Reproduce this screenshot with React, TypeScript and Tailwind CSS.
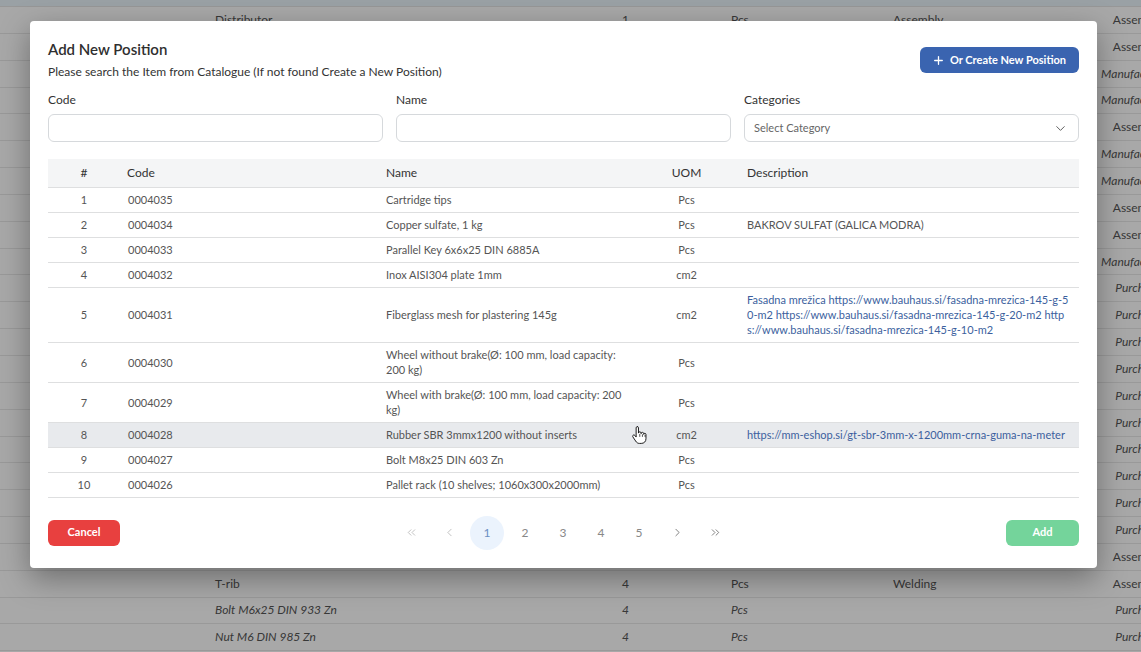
import { ChevronDown, ChevronLeft, ChevronRight, ChevronsLeft, ChevronsRight, Plus } from 'lucide-react';

type BgRow = { name?: string; qty?: string; uom?: string; op?: string; type: string; italic?: boolean };

const bgRows: BgRow[] = [
  { name: 'Distributor', qty: '1', uom: 'Pcs', op: 'Assembly', type: 'Assembly' },
  { type: 'Assembly' },
  { type: 'Manufacturing', italic: true },
  { type: 'Manufacturing', italic: true },
  { type: 'Assembly' },
  { type: 'Manufacturing', italic: true },
  { type: 'Manufacturing', italic: true },
  { type: 'Assembly' },
  { type: 'Assembly' },
  { type: 'Manufacturing', italic: true },
  { type: 'Purchase', italic: true },
  { type: 'Purchase', italic: true },
  { type: 'Purchase', italic: true },
  { type: 'Purchase', italic: true },
  { type: 'Purchase', italic: true },
  { type: 'Purchase', italic: true },
  { type: 'Purchase', italic: true },
  { type: 'Purchase', italic: true },
  { type: 'Purchase', italic: true },
  { type: 'Purchase', italic: true },
  { type: 'Assembly' },
  { name: 'T-rib', qty: '4', uom: 'Pcs', op: 'Welding', type: 'Assembly' },
  { name: 'Bolt M6x25 DIN 933 Zn', qty: '4', uom: 'Pcs', type: 'Purchase', italic: true },
  { name: 'Nut M6 DIN 985 Zn', qty: '4', uom: 'Pcs', type: 'Purchase', italic: true },
];

type Item = { code: string; name: string; uom: string; desc?: string; link?: boolean };

const items: Item[] = [
  { code: '0004035', name: 'Cartridge tips', uom: 'Pcs' },
  { code: '0004034', name: 'Copper sulfate, 1 kg', uom: 'Pcs', desc: 'BAKROV SULFAT (GALICA MODRA)' },
  { code: '0004033', name: 'Parallel Key 6x6x25 DIN 6885A', uom: 'Pcs' },
  { code: '0004032', name: 'Inox AISI304 plate 1mm', uom: 'cm2' },
  {
    code: '0004031',
    name: 'Fiberglass mesh for plastering 145g',
    uom: 'cm2',
    desc: 'Fasadna mrežica https://www.bauhaus.si/fasadna-mrezica-145-g-50-m2 https://www.bauhaus.si/fasadna-mrezica-145-g-20-m2 https://www.bauhaus.si/fasadna-mrezica-145-g-10-m2',
    link: true,
  },
  { code: '0004030', name: 'Wheel without brake(Ø: 100 mm, load capacity: 200 kg)', uom: 'Pcs' },
  { code: '0004029', name: 'Wheel with brake(Ø: 100 mm, load capacity: 200 kg)', uom: 'Pcs' },
  {
    code: '0004028',
    name: 'Rubber SBR 3mmx1200 without inserts',
    uom: 'cm2',
    desc: 'https://mm-eshop.si/gt-sbr-3mm-x-1200mm-crna-guma-na-meter',
    link: true,
  },
  { code: '0004027', name: 'Bolt M8x25 DIN 603 Zn', uom: 'Pcs' },
  { code: '0004026', name: 'Pallet rack (10 shelves; 1060x300x2000mm)', uom: 'Pcs' },
];

function HandCursor() {
  return (
    <svg width="15" height="19" viewBox="0 0 16 20" className="absolute left-[602px] top-[404px]">
      <path
        d="M5.5 1.5c.8 0 1.4.6 1.4 1.4v5.6c0-.8.6-1.4 1.4-1.4s1.4.6 1.4 1.4v.6c0-.8.6-1.4 1.4-1.4s1.4.6 1.4 1.4v.8c0-.7.6-1.2 1.2-1.2s1.2.5 1.2 1.2v4.6c0 3-2 5-5 5h-2c-2 0-3-1-4-2.5l-3-4.5c-.4-.7-.2-1.5.5-1.9.6-.3 1.3-.1 1.7.4l1.3 1.7V2.9c0-.8.6-1.4 1.4-1.4z"
        fill="#fff"
        stroke="#111"
        strokeWidth="1"
        strokeLinejoin="round"
      />
      <path d="M8.3 9.5v3M11.1 9.8v2.7M13.9 10.3v2.2" stroke="#111" strokeWidth="0.8" />
    </svg>
  );
}

export default function App() {
  return (
    <div className="relative h-[652px] w-[1141px] overflow-hidden bg-white font-['Lato',sans-serif]">
      {/* page behind the dialog */}
      <div className="h-[7px] border-b border-[#e6e6e6] bg-[#eaf4fb]" />
      {bgRows.map((r, i) => (
        <div
          key={i}
          className={`grid h-[26.85px] grid-cols-[215px_405px_111px_162px_193px_104px] items-center border-b border-[#e8e8e8] text-[12px] text-[#555] ${r.italic ? 'italic' : ''}`}
        >
          <div />
          <div>{r.name}</div>
          <div className="pl-[2px]">{r.qty}</div>
          <div>{r.uom}</div>
          <div>{r.op}</div>
          <div className="whitespace-nowrap text-center">{r.type}</div>
        </div>
      ))}

      <div className="absolute inset-0 bg-black/[0.34]" />

      {/* dialog */}
      <div className="absolute left-[30px] top-[21px] flex h-[547px] w-[1067px] flex-col rounded-[4px] bg-white px-[18px] pt-[18px] shadow-[0_10px_30px_rgba(0,0,0,0.35)]">
        <div className="flex items-start justify-between">
          <div>
            <h2 className="text-[15px] leading-[20px] font-semibold text-[#2f2f2f]">Add New Position</h2>
            <p className="mt-[5px] text-[12px] leading-[16px] text-[#333]">
              Please search the Item from Catalogue (If not found Create a New Position)
            </p>
          </div>
          <button className="mt-[8px] flex h-[26px] items-center gap-[5px] rounded-md bg-[#3a64b0] pr-[13px] pl-[12px] text-[11px] font-bold text-white">
            <Plus size={13} strokeWidth={2.4} />
            Or Create New Position
          </button>
        </div>

        <div className="mt-[12px] grid grid-cols-3 gap-[13px]">
          <div>
            <label className="block text-[12px] leading-[16px] text-[#333]">Code</label>
            <input className="mt-[6px] h-[28px] w-full rounded-md border border-[#d6d9dc] px-2 text-[11px] outline-none" />
          </div>
          <div>
            <label className="block text-[12px] leading-[16px] text-[#333]">Name</label>
            <input className="mt-[6px] h-[28px] w-full rounded-md border border-[#d6d9dc] px-2 text-[11px] outline-none" />
          </div>
          <div>
            <label className="block text-[12px] leading-[16px] text-[#333]">Categories</label>
            <div className="mt-[6px] flex h-[28px] w-full items-center justify-between rounded-md border border-[#d6d9dc] pr-[10px] pl-[9px] text-[11px] text-[#666]">
              <span>Select Category</span>
              <ChevronDown size={15} strokeWidth={1.5} className="text-[#555]" />
            </div>
          </div>
        </div>

        <table className="mt-[17px] w-full table-fixed border-collapse text-[11px] leading-[15px] text-[#555]">
          <colgroup>
            <col className="w-[72px]" />
            <col className="w-[258px]" />
            <col className="w-[260px]" />
            <col className="w-[97px]" />
            <col />
          </colgroup>
          <thead>
            <tr className="h-[28px] border-b border-[#dedfe0] bg-[#f4f5f6] text-[12px] text-[#333]">
              <th className="text-center font-normal">#</th>
              <th className="pl-[7px] text-left font-normal">Code</th>
              <th className="pl-2 text-left font-normal">Name</th>
              <th className="text-center font-normal">UOM</th>
              <th className="pl-3 text-left font-normal">Description</th>
            </tr>
          </thead>
          <tbody>
            {items.map((it, i) => (
              <tr key={it.code} className={`border-b border-[#dedfe0] ${i === 7 ? 'bg-[#e8eaed]' : ''}`}>
                <td className="py-[4.5px] text-center">{i + 1}</td>
                <td className="py-[4.5px] pl-2">{it.code}</td>
                <td className="py-[4.5px] pr-2 pl-2">{it.name}</td>
                <td className="py-[4.5px] text-center">{it.uom}</td>
                <td className={`py-[4.5px] pr-[6px] pl-3 break-all ${it.link ? 'text-[#3c5f9e]' : ''}`}>{it.desc}</td>
              </tr>
            ))}
          </tbody>
        </table>

        <div className="mt-[18px] flex items-center justify-between">
          <button className="h-[26px] w-[72px] rounded-md bg-[#e8403f] text-[11px] font-bold text-white">Cancel</button>
          <div className="flex items-center gap-[4px] text-[12px] text-[#888]">
            <span className="flex h-[34px] w-[34px] items-center justify-center text-[#aaa]">
              <ChevronsLeft size={13} strokeWidth={1.3} />
            </span>
            <span className="flex h-[34px] w-[34px] items-center justify-center text-[#aaa]">
              <ChevronLeft size={13} strokeWidth={1.3} />
            </span>
            <span className="flex h-[34px] w-[34px] items-center justify-center rounded-full bg-[#ebf3fd] text-[#6b8fc4]">1</span>
            {['2', '3', '4', '5'].map(p => (
              <span key={p} className="flex h-[34px] w-[34px] items-center justify-center">
                {p}
              </span>
            ))}
            <span className="flex h-[34px] w-[34px] items-center justify-center text-[#666]">
              <ChevronRight size={13} strokeWidth={1.5} />
            </span>
            <span className="flex h-[34px] w-[34px] items-center justify-center text-[#666]">
              <ChevronsRight size={13} strokeWidth={1.5} />
            </span>
          </div>
          <button className="h-[26px] w-[73px] rounded-md bg-[#74d49b] text-[11px] font-bold text-white">Add</button>
        </div>

        <HandCursor />
      </div>
    </div>
  );
}
